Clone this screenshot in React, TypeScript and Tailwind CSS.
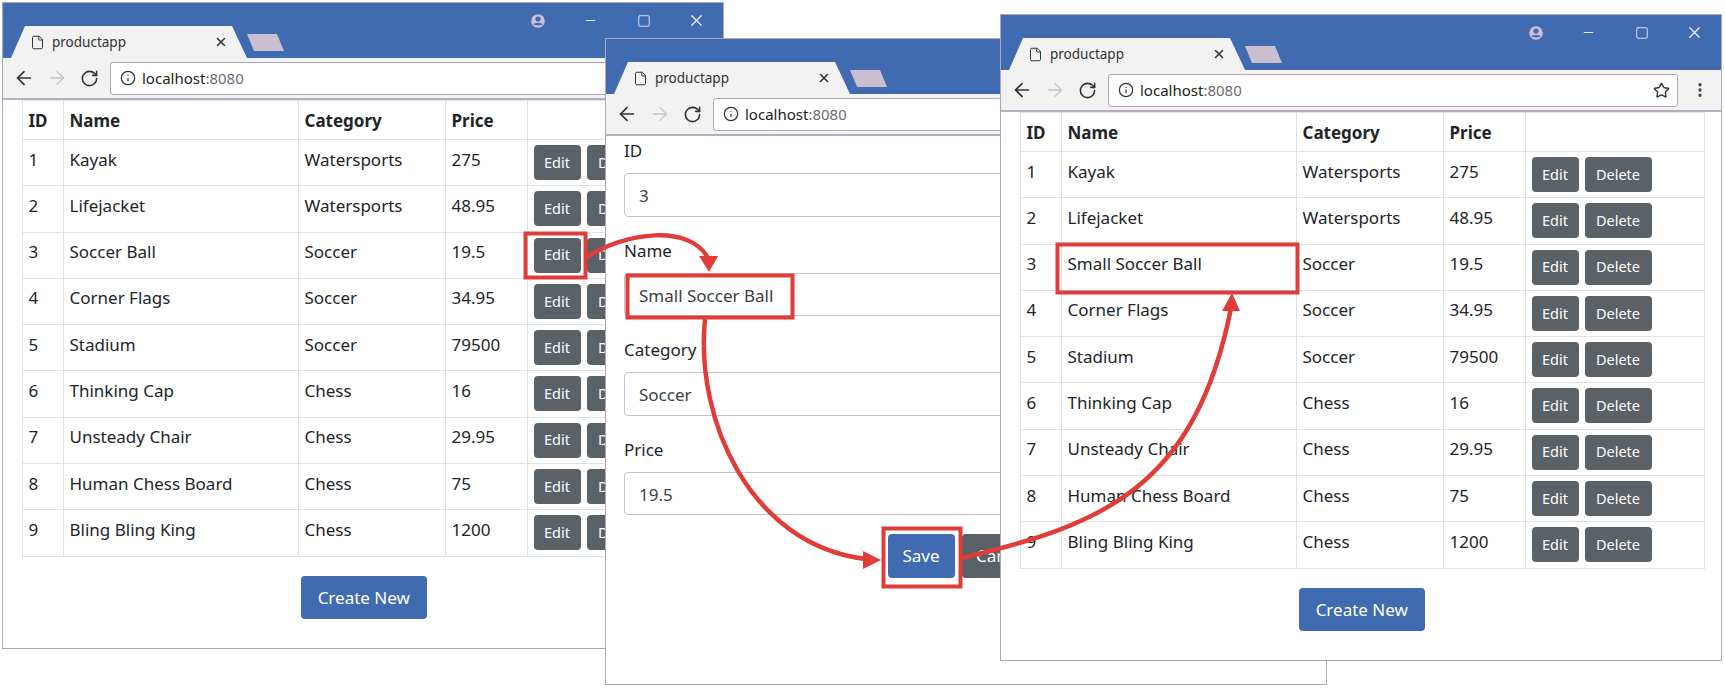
import { ArrowLeft, ArrowRight, EllipsisVertical, File, Info, Minus, RotateCw, Square, Star, X } from "lucide-react";

type Product = { id: number; name: string; category: string; price: string };

const products: Product[] = [
  { id: 1, name: "Kayak", category: "Watersports", price: "275" },
  { id: 2, name: "Lifejacket", category: "Watersports", price: "48.95" },
  { id: 3, name: "Soccer Ball", category: "Soccer", price: "19.5" },
  { id: 4, name: "Corner Flags", category: "Soccer", price: "34.95" },
  { id: 5, name: "Stadium", category: "Soccer", price: "79500" },
  { id: 6, name: "Thinking Cap", category: "Chess", price: "16" },
  { id: 7, name: "Unsteady Chair", category: "Chess", price: "29.95" },
  { id: 8, name: "Human Chess Board", category: "Chess", price: "75" },
  { id: 9, name: "Bling Bling King", category: "Chess", price: "1200" },
];

function ProfileIcon() {
  return (
    <svg width="16" height="16" viewBox="0 0 16 16" fill="none">
      <circle cx="8" cy="8" r="6.8" fill="#cdbfd6" />
      <circle cx="8" cy="6" r="2.6" fill="#416bb1" />
      <path d="M3.2 11.3C4.8 9.6 11.2 9.6 12.8 11.3C11.2 12.6 4.8 12.6 3.2 11.3Z" fill="#416bb1" />
    </svg>
  );
}

function BrowserWindow({ className, showStar, children }: { className: string; showStar?: boolean; children: React.ReactNode }) {
  return (
    <div className={`absolute flex h-[647px] w-[722px] flex-col overflow-hidden border border-[#b3a4ba] bg-white ${className}`}>
      <div className="flex h-[55px] shrink-0 bg-[#416bb1] pl-[8px]">
        <div className="flex h-[32px] w-[236px] items-center self-end bg-[#f2f2f2] pr-[19px] pl-[19px] [clip-path:polygon(0_100%,14px_0,221px_0,100%_100%)]">
          <File size={15} strokeWidth={1.6} className="text-[#333]" />
          <span className="ml-[7px] text-[13.5px] text-[#333]">productapp</span>
          <X size={14} strokeWidth={2.6} className="ml-auto text-[#333]" />
        </div>
        <div className="mb-[7px] h-[17px] w-[37px] self-end bg-[#c9bfd0] [clip-path:polygon(0_0,30px_0,100%_100%,7px_100%)]" />
        <div className="ml-auto flex h-[35px]">
          <div className="flex w-[53px] items-center justify-center"><ProfileIcon /></div>
          <div className="flex w-[53px] items-center justify-center"><Minus size={15} strokeWidth={1.6} className="text-[#e8e4ec]" /></div>
          <div className="flex w-[53px] items-center justify-center"><Square size={14} strokeWidth={1.6} className="text-[#e8e4ec]" /></div>
          <div className="flex w-[53px] items-center justify-center"><X size={19} strokeWidth={1.5} className="text-[#f2eff5]" /></div>
        </div>
      </div>
      <div className="flex h-[42px] shrink-0 items-center border-b-2 border-[#b9adc0] bg-[#f2f2f2]">
        <div className="flex w-[107px] shrink-0 items-center pl-[10px]">
          <ArrowLeft size={22} strokeWidth={1.9} className="text-[#333]" />
          <ArrowRight size={22} strokeWidth={1.4} className="ml-[11px] text-[#c8c0cc]" />
          <RotateCw size={19} strokeWidth={2} className="ml-[12px] text-[#333]" />
        </div>
        <div className="flex h-[33px] w-[570px] items-center rounded-[3px] border border-[#b3a4ba] bg-white pl-[9px]">
          <Info size={16} strokeWidth={1.8} className="text-[#333]" />
          <span className="ml-[6px] text-[15px] text-[#222]">localhost<span className="text-[#6f6a75]">:8080</span></span>
          {showStar && <Star size={17} strokeWidth={2} className="mr-[7px] ml-auto text-[#333]" />}
        </div>
        {showStar && <EllipsisVertical size={18} strokeWidth={2.4} className="ml-[13px] text-[#444]" />}
      </div>
      {children}
    </div>
  );
}

function ProductList({ items }: { items: Product[] }) {
  return (
    <div className="flex flex-col pr-[17px] pl-[18.5px] text-[#212529]">
      <table className="w-[684px] table-fixed border-collapse text-[17px]">
        <colgroup>
          <col className="w-[41px]" />
          <col className="w-[235px]" />
          <col className="w-[147px]" />
          <col className="w-[82px]" />
          <col className="w-[179px]" />
        </colgroup>
        <thead>
          <tr className="h-[39px]">
            {["ID", "Name", "Category", "Price", ""].map((h) => (
              <th key={h} className="border border-[#dee2e6] px-[6px] pt-[6.5px] pb-[3.5px] text-left align-top font-bold">{h}</th>
            ))}
          </tr>
        </thead>
        <tbody>
          {items.map((p) => (
            <tr key={p.id} className="h-[46.3px]">
              <td className="border border-[#dee2e6] px-[6px] pt-[6.5px] pb-[3.5px] align-top">{p.id}</td>
              <td className="border border-[#dee2e6] px-[6px] pt-[6.5px] pb-[3.5px] align-top">{p.name}</td>
              <td className="border border-[#dee2e6] px-[6px] pt-[6.5px] pb-[3.5px] align-top">{p.category}</td>
              <td className="border border-[#dee2e6] px-[6px] pt-[6.5px] pb-[3.5px] align-top">{p.price}</td>
              <td className="border border-[#dee2e6] px-[6px] py-[5px] align-top">
                <div className="flex gap-[6px]">
                  <button className="h-[35px] w-[47px] rounded-[4px] bg-[#5a6268] text-[14.5px] text-white">Edit</button>
                  <button className="h-[35px] w-[67px] rounded-[4px] bg-[#5a6268] text-[14.5px] text-white">Delete</button>
                </div>
              </td>
            </tr>
          ))}
        </tbody>
      </table>
      <div className="mt-[19.5px] flex justify-center">
        <button className="h-[43px] w-[126px] rounded-[4px] bg-[#416bb1] text-[17px] text-white">Create New</button>
      </div>
    </div>
  );
}

function Field({ label, value }: { label: string; value: string }) {
  return (
    <div className="mb-[21px] flex flex-col">
      <label className="mb-[9px] h-[26px] text-[17px] leading-[26px]">{label}</label>
      <input
        readOnly
        value={value}
        className="h-[43.5px] rounded-[4px] border border-[#c9bfd0] px-[14px] pt-[2px] text-[17px] text-[#3a3f44]"
      />
    </div>
  );
}

export default function App() {
  const edited = products.map((p) => (p.id === 3 ? { ...p, name: "Small Soccer Ball" } : p));
  return (
    <div className="relative h-[689px] w-[1725px] overflow-hidden bg-white font-['Noto_Sans',sans-serif]">
      <BrowserWindow className="top-[2px] left-[2px]">
        <ProductList items={products} />
      </BrowserWindow>

      <BrowserWindow className="top-[38px] left-[605px]">
        <div className="flex flex-col pt-[2px] pr-[19px] pl-[18px] text-[#212529]">
          <Field label="ID" value="3" />
          <Field label="Name" value="Small Soccer Ball" />
          <Field label="Category" value="Soccer" />
          <Field label="Price" value="19.5" />
          <div className="-mt-[2px] flex justify-center gap-[7px]">
            <button className="h-[44px] w-[67px] rounded-[4px] bg-[#416bb1] text-[17px] text-white">Save</button>
            <button className="h-[44px] w-[82px] rounded-[4px] bg-[#5a6268] text-[17px] text-white">Cancel</button>
          </div>
        </div>
      </BrowserWindow>

      <BrowserWindow className="top-[14px] left-[1000px]" showStar>
        <ProductList items={edited} />
      </BrowserWindow>

      {/* red callouts drawn over all three windows */}
      <svg className="pointer-events-none absolute top-0 left-0" width="1725" height="689" fill="none" stroke="#e03c39" strokeWidth="4">
        <rect x="525.5" y="233.5" width="60" height="44" />
        <rect x="627.5" y="275.5" width="165" height="42" />
        <rect x="883.5" y="528.5" width="77" height="58" />
        <rect x="1057.5" y="244.5" width="240" height="48" />
        <path strokeWidth="4.5" d="M587 257C625 232 690 224 708 258" />
        <path strokeWidth="4.5" d="M705 319C695 420 750 545 866 559" />
        <path strokeWidth="4.5" d="M962 558C1100 525 1195 490 1231 308" />
        <path d="M709 272L699 256H718Z" fill="#e03c39" stroke="none" />
        <path d="M881 560L863 551V569Z" fill="#e03c39" stroke="none" />
        <path d="M1232 293L1222 311H1240Z" fill="#e03c39" stroke="none" />
      </svg>
    </div>
  );
}
